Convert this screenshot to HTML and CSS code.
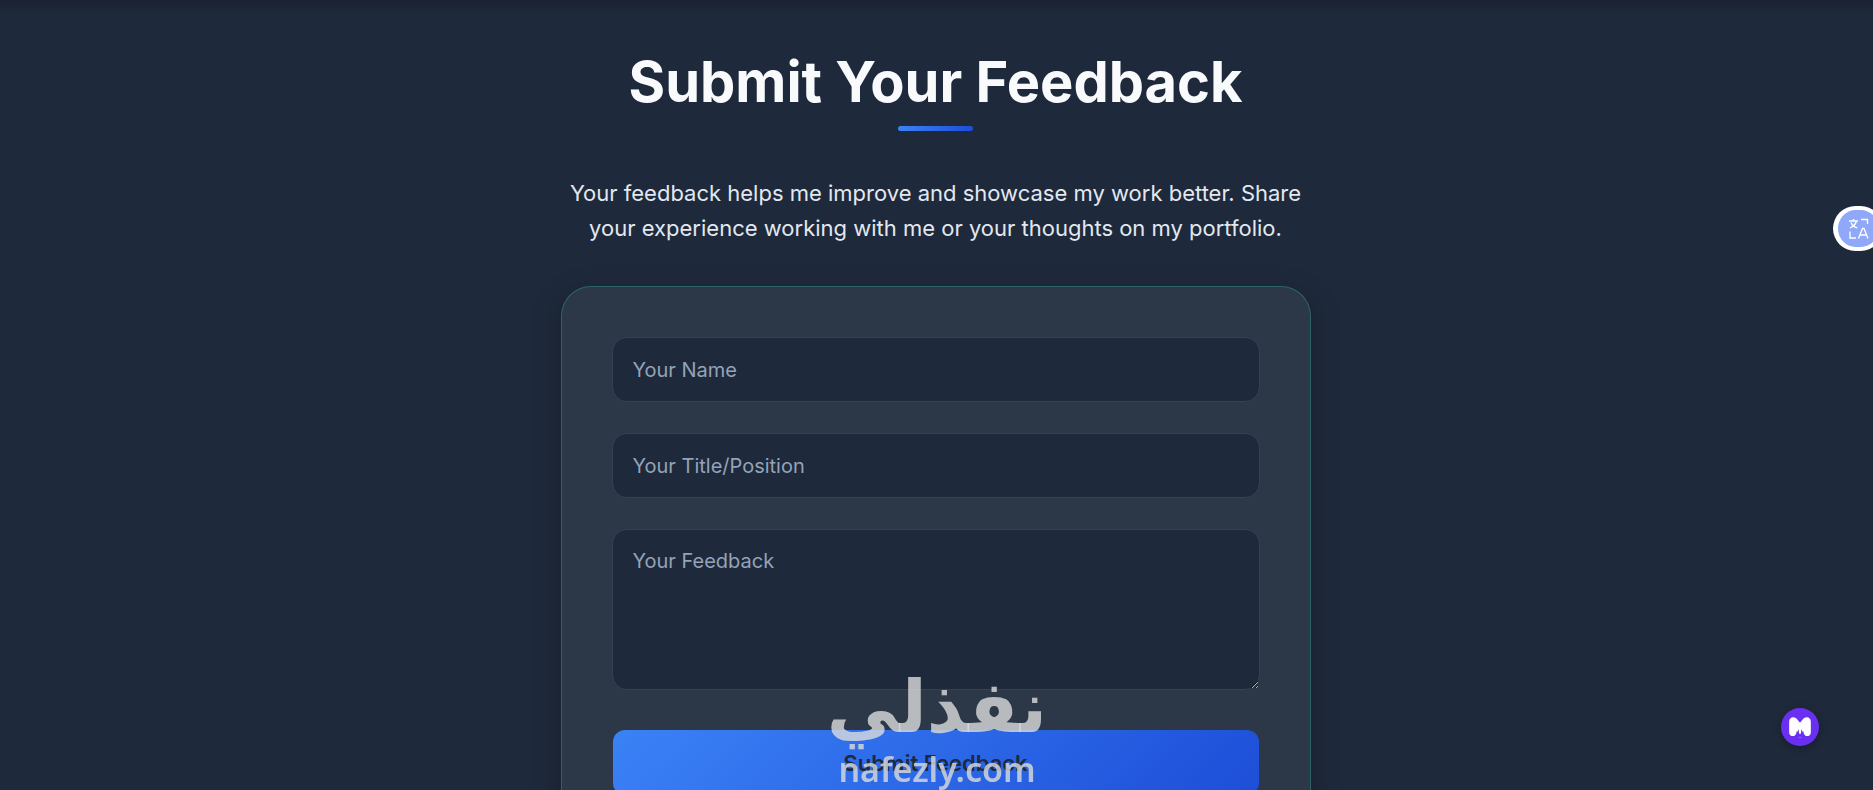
FILE: index.html
```html
<!DOCTYPE html>
<html lang="en">

<head>
  <meta charset="UTF-8">
  <meta name="viewport" content="width=device-width, initial-scale=1.0">
  <title>Submit Your Feedback</title>
  <link rel="stylesheet" href="styles.css">
</head>

<body>
  <section class="feedback">
    <h1 class="feedback-title">Submit Your Feedback</h1>
    <div class="title-bar"></div>
    <p class="feedback-intro">Your feedback helps me improve and showcase my work better. Share your experience working with me or your thoughts on my portfolio.</p>

    <form class="feedback-card">
      <input class="field" type="text" placeholder="Your Name">
      <input class="field" type="text" placeholder="Your Title/Position">
      <textarea class="field field-area" placeholder="Your Feedback"></textarea>
      <button class="submit-btn" type="button">Submit Feedback</button>
    </form>
  </section>

  <div class="translate-tab">
    <svg viewBox="0 0 24 24" width="24" height="24" fill="none" stroke="#fff" stroke-width="1.3">
      <path d="M2 4h9M6.500 2v2M9.500 4c-.8 3-3 5.500-6.500 7M4 5.500c1 2.500 3 4.500 6.500 5.500" />
      <path d="M14 2.500h6.500V7M3 14.500V21h6" />
      <path d="M11.500 21.500l4-10h1.500l4 10M13 18h7" />
    </svg>
  </div>

  <div class="m-badge">
    <svg viewBox="0 0 24 24" width="26" height="26">
      <path fill="#fff" d="M2 17V7C2 2.500 7 1.500 9.500 5L12 8l2.500-3C17 1.500 22 2.500 22 7v10c0 4-5.500 4.500-6.500 1L13 14v8h-2v-8l-2.500 4C7.500 21.500 2 21 2 17z" />
      <path fill="#6a2ff0" d="M12 22.500l-4-6.500 4 2.500 4-2.500z" />
    </svg>
  </div>

  <div class="watermark">
    <div class="watermark-ar" lang="ar" dir="rtl">نفذلي</div>
    <div class="watermark-en">nafezly.com</div>
  </div>
</body>

</html>
```

FILE: styles.css
```css
* {
  box-sizing: border-box;
}

html,
body {
  height: 100%;
  overflow: hidden;
}

body {
  margin: 0;
  font-family: Inter, "Liberation Sans", sans-serif;
  background-color: #1e293b;
  color: #f8fafc;
}

.feedback {
  display: flex;
  flex-direction: column;
  align-items: center;
  padding: 48px 2px 0 0;
  background: linear-gradient(#1a2233 0, #1e293b 14px);
}

.feedback-title {
  margin: 0;
  font-size: 56px;
  line-height: 68px;
  font-weight: 700;
}

.title-bar {
  width: 75px;
  height: 5px;
  margin-top: 10px;
  border-radius: 3px;
  background: linear-gradient(90deg, #3b82f6, #1d4ed8);
}

.feedback-intro {
  width: 750px;
  margin: 45px 0 0;
  font-size: 22px;
  line-height: 35px;
  text-align: center;
  color: #e2e8f0;
}

.feedback-card {
  display: flex;
  flex-direction: column;
  width: 750px;
  margin-top: 40px;
  padding: 50px;
  border: 1px solid rgba(45, 212, 191, 0.28);
  border-radius: 30px;
  background-color: #2c3848;
  box-shadow: 0 10px 30px rgba(0, 0, 0, 0.25);
}

.field {
  display: block;
  width: 100%;
  height: 65px;
  margin-bottom: 31px;
  padding: 20px;
  border: 1px solid #334155;
  border-radius: 15px;
  background-color: #1e293b;
  color: #f8fafc;
  font-family: inherit;
  font-size: 20px;
}

.field::placeholder {
  color: #94a3b8;
}

.field-area {
  height: 161px;
  margin-bottom: 40px;
  padding-top: 19px;
  resize: vertical;
  color-scheme: dark;
}

.submit-btn {
  height: 65px;
  margin: 0 1px;
  border: none;
  border-radius: 12px;
  background: linear-gradient(135deg, #3b82f6, #1d4ed8);
  color: #1e293b;
  font-family: inherit;
  font-size: 22px;
  font-weight: 600;
}

.translate-tab {
  position: fixed;
  top: 206px;
  right: -10px;
  display: flex;
  align-items: center;
  width: 50px;
  height: 45px;
  padding-left: 9px;
  border: 4px solid #fff;
  border-left-width: 5px;
  border-radius: 23px;
  background-color: #8fa8f8;
}

.m-badge {
  position: fixed;
  top: 708px;
  left: 1781px;
  display: flex;
  align-items: center;
  justify-content: center;
  width: 38px;
  height: 38px;
  border-radius: 50%;
  background-color: #6a2ff0;
  box-shadow: 0 2px 8px rgba(0, 0, 0, 0.3);
}

.watermark {
  position: fixed;
  top: 668px;
  left: 791px;
  width: 292px;
  text-align: center;
  color: rgba(220, 220, 220, 0.8);
}

.watermark-ar {
  font-family: "DejaVu Sans", sans-serif;
  font-size: 72px;
  line-height: 79px;
  font-weight: 700;
}

.watermark-en {
  font-family: "Noto Sans", sans-serif;
  font-size: 34px;
  line-height: 44px;
  font-weight: 600;
}
```
